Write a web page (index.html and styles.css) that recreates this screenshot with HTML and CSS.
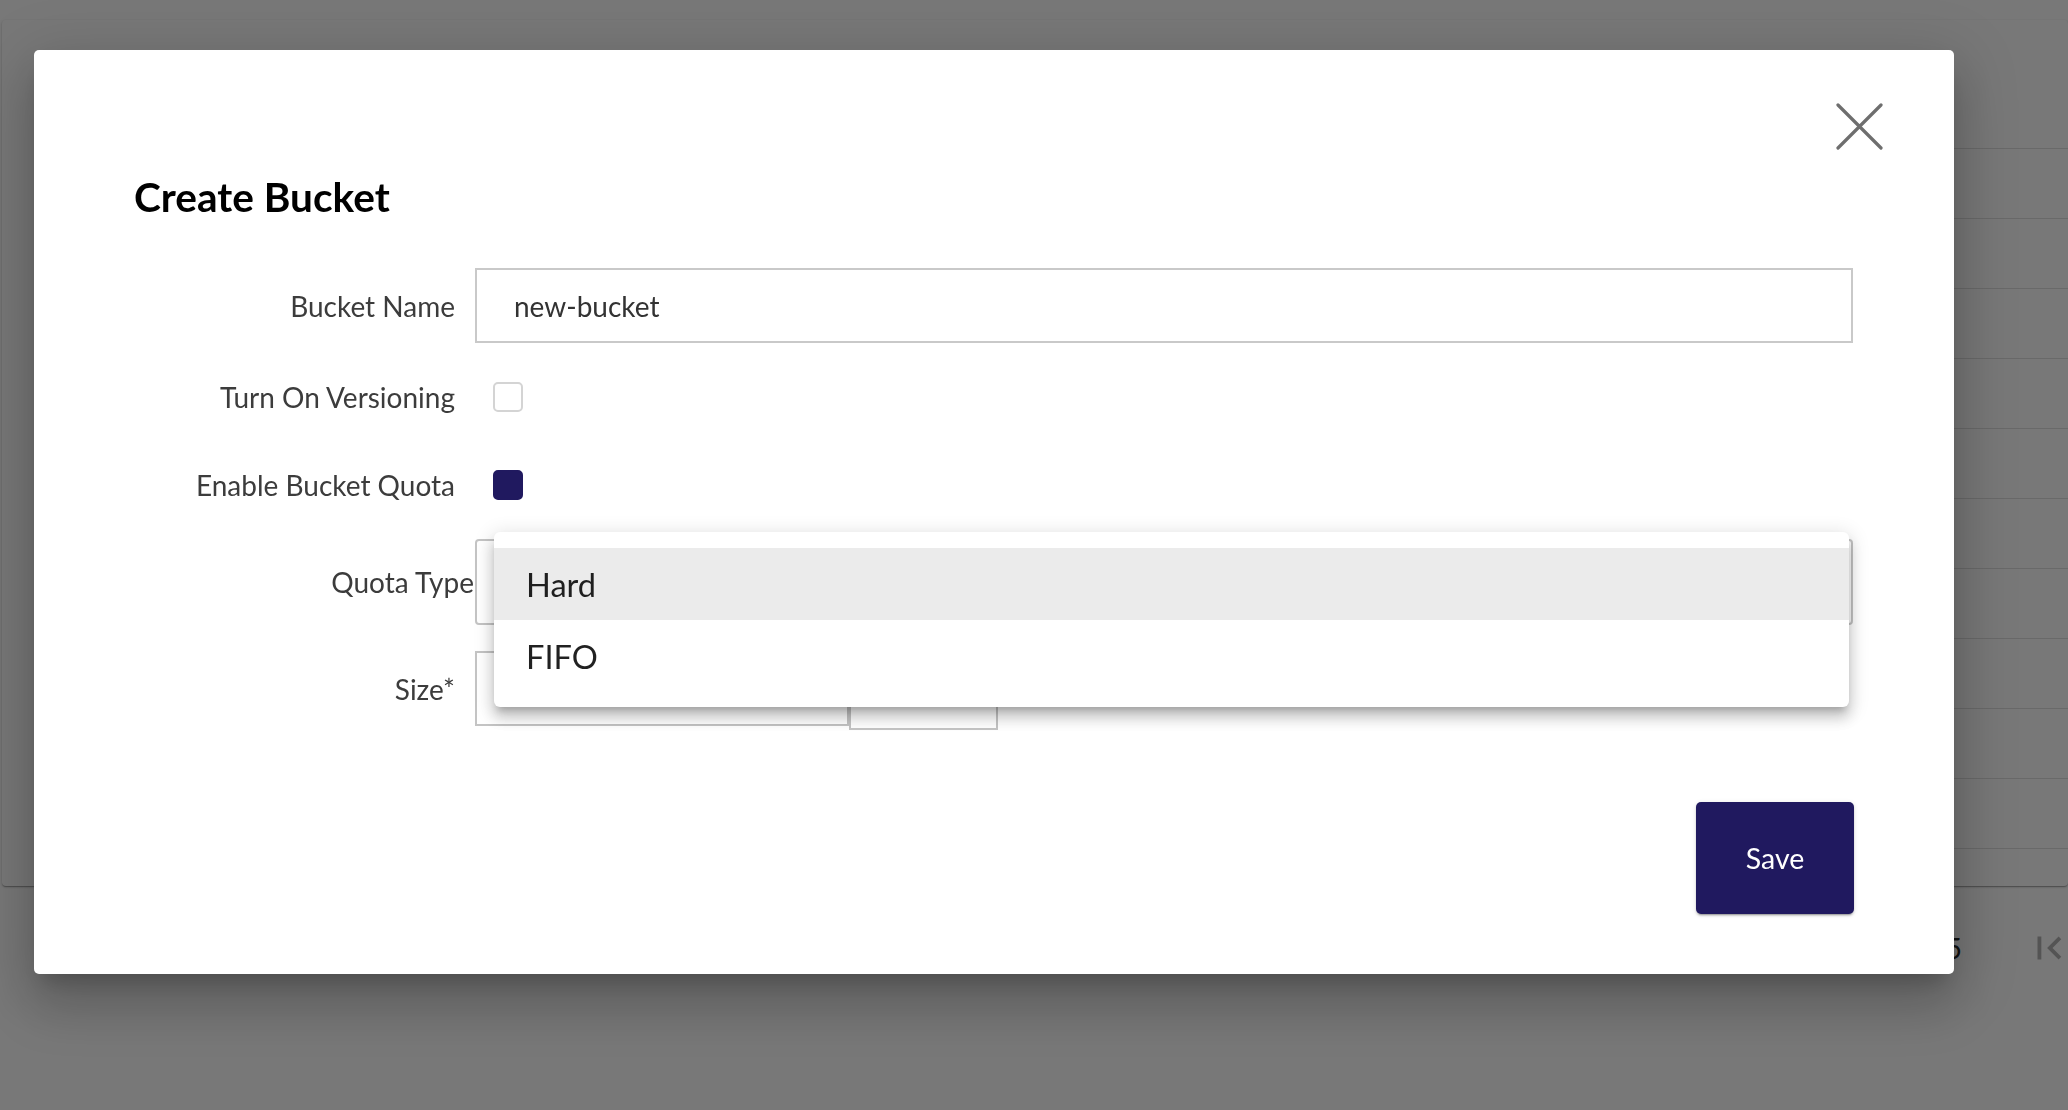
FILE: index.html
```html
<!DOCTYPE html>
<html lang="en">
<head>
<meta charset="utf-8">
<title>Create Bucket</title>
<link rel="stylesheet" href="styles.css">
</head>
<body>
<div class="page">
  <div class="card">
    <div class="card-head"></div>
    <div class="row"></div>
    <div class="row"></div>
    <div class="row"></div>
    <div class="row"></div>
    <div class="row"></div>
    <div class="row"></div>
    <div class="row"></div>
    <div class="row"></div>
    <div class="row"></div>
    <div class="row"></div>
  </div>
  <div class="pagination">
    <span class="range">1–5 of 5</span>
    <svg class="first-page" viewBox="0 0 24 24" aria-hidden="true"><path d="M18.41 16.59L13.82 12l4.59-4.59L17 6l-6 6 6 6zM6 6h2v12H6z" fill="currentColor"/></svg>
  </div>
</div>

<div class="overlay"></div>

<div class="modal">
  <button class="close" type="button" aria-label="Close">
    <svg viewBox="0 0 47 47" width="47" height="47"><path d="M2 2L45 45M45 2L2 45" stroke="#6e6e6e" stroke-width="3.2" stroke-linecap="round" fill="none"/></svg>
  </button>
  <h2 class="title">Create Bucket</h2>
  <div class="form">
    <div class="field f-text">
      <label class="label">Bucket Name</label>
      <div class="input">new-bucket</div>
    </div>
    <div class="field f-check">
      <label class="label">Turn On Versioning</label>
      <div><span class="checkbox"></span></div>
    </div>
    <div class="field f-check">
      <label class="label">Enable Bucket Quota</label>
      <div><span class="checkbox checked"></span></div>
    </div>
    <div class="field f-select">
      <label class="label label-wide">Quota Type</label>
      <div class="select"></div>
    </div>
    <div class="field f-size">
      <label class="label">Size*</label>
      <div class="size-group">
        <div class="size-input"></div>
        <div class="unit"></div>
      </div>
    </div>
  </div>
  <div class="save-row">
    <button class="save" type="button">Save</button>
  </div>

  <div class="menu">
    <div class="menu-item selected">Hard</div>
    <div class="menu-item">FIFO</div>
  </div>
</div>
</body>
</html>
```
FILE: styles.css
```css
* { box-sizing: border-box; }
html, body { margin: 0; padding: 0; }
body {
  width: 2068px;
  height: 1110px;
  overflow: hidden;
  background: #fff;
  font-family: Lato, "Open Sans", sans-serif;
  position: relative;
}

/* background page */
.page { padding: 20px 0 0 2px; }
.card {
  background: #fff;
  border-radius: 4px;
  height: 866px;
  box-shadow: 0 1px 3px rgba(0,0,0,.2), 0 1px 1px rgba(0,0,0,.14), 0 2px 1px -1px rgba(0,0,0,.12);
}
.card-head { height: 129px; border-bottom: 1px solid #e0e0e0; margin-left: 40px; }
.row { height: 70px; border-bottom: 1px solid #e0e0e0; margin-left: 40px; }
.pagination {
  display: flex;
  justify-content: flex-end;
  align-items: center;
  gap: 64px;
  height: 124px;
  font-size: 28px;
  color: rgba(0,0,0,.87);
}
.first-page { width: 46px; height: 46px; margin-right: -4px; color: rgba(0,0,0,.3); flex: none; }

.overlay { position: fixed; inset: 0; background: rgba(0,0,0,.53); }

/* modal */
.modal {
  position: absolute;
  left: 34px;
  top: 50px;
  width: 1920px;
  height: 924px;
  background: #fff;
  border-radius: 5px;
  padding: 123px 101px 0 100px;
  box-shadow: 0 15px 20px -9px rgba(0,0,0,.2), 0 32px 51px 4px rgba(0,0,0,.14), 0 12px 61px 11px rgba(0,0,0,.12);
}
.close {
  position: absolute;
  top: 53px;
  right: 71px;
  width: 47px;
  height: 47px;
  padding: 0;
  border: 0;
  background: none;
}
.close svg { display: block; }
.title {
  margin: 0;
  font-size: 40.6px;
  line-height: 48px;
  font-weight: 700;
  color: #000;
}
.form { margin-top: 47px; display: flex; flex-direction: column; gap: 20px; }
.field {
  display: grid;
  grid-template-columns: 321px 1fr;
  column-gap: 20px;
  align-items: center;
}
.f-text { height: 75px; }
.f-check { height: 68px; }
.f-select { height: 86px; }
.f-size { height: 88px; }
.label {
  text-align: right;
  font-size: 28px;
  color: #3c3c3c;
}
.label-wide { margin-right: -19px; }
.input {
  height: 75px;
  border: 2px solid #c9c9c9;
  padding-left: 37px;
  font-size: 28px;
  color: #333;
  display: flex;
  align-items: center;
}
.checkbox {
  display: block;
  width: 30px;
  height: 30px;
  margin-left: 18px;
  border: 2px solid #d4d4d4;
  border-radius: 5px;
}
.checkbox.checked { background: #20195f; border-color: #20195f; }
.select { height: 86px; border: 2px solid #c4c4c4; border-radius: 4px; }
.size-group { display: flex; align-items: flex-start; align-self: start; margin-top: 6px; }
.size-input { width: 374px; height: 75px; border: 2px solid #c4c4c4; }
.unit { width: 149px; height: 79px; border: 2px solid #c4c4c4; }

.save-row { display: flex; justify-content: flex-end; margin-top: 69px; margin-right: -1px; }
.save {
  width: 158px;
  height: 112px;
  background: #20195f;
  color: #fff;
  font-family: inherit;
  font-size: 28.5px;
  border: 0;
  border-radius: 5px;
  box-shadow: 0 3px 1px -2px rgba(0,0,0,.2), 0 2px 2px 0 rgba(0,0,0,.14), 0 1px 5px 0 rgba(0,0,0,.12);
}

/* dropdown menu popover */
.menu {
  position: absolute;
  left: 460px;
  top: 482px;
  width: 1355px;
  padding: 16px 0 15px;
  background: #fff;
  border-radius: 6px;
  box-shadow: 0 7px 7px -4px rgba(0,0,0,.2), 0 11px 13px 1px rgba(0,0,0,.14), 0 4px 19px 3px rgba(0,0,0,.12);
}
.menu-item {
  height: 72px;
  padding-left: 32px;
  display: flex;
  align-items: center;
  font-size: 32.6px;
  color: rgba(0,0,0,.87);
}
.menu-item.selected { background: #ebebeb; }
```
